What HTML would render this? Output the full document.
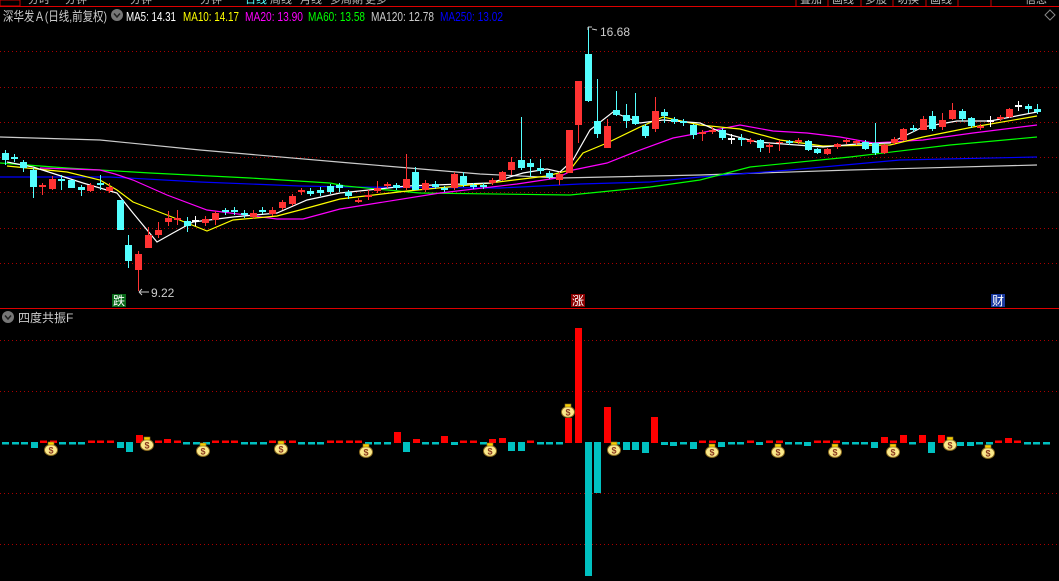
<!DOCTYPE html>
<html><head><meta charset="utf-8">
<style>
html,body{margin:0;padding:0;background:#000;width:1059px;height:581px;overflow:hidden;}
svg{display:block;}
text{font-family:"Liberation Sans","Noto Sans CJK SC",sans-serif;}
</style></head>
<body>
<svg id="s" width="1059" height="581" viewBox="0 0 1059 581" xmlns="http://www.w3.org/2000/svg">
<rect width="1059" height="581" fill="#000"/>
<g fill="#bbb" font-size="11">
<text x="28" y="3">分时</text><text x="65" y="3">分钟</text><text x="130" y="3">分钟</text><text x="200" y="3">分钟</text>
<text x="245" y="3" fill="#5ff">日线</text><text x="270" y="3">周线</text><text x="300" y="3">月线</text><text x="330" y="3">多周期</text><text x="365" y="3">更多</text>
<text x="800" y="3">叠加</text><text x="832" y="3">画线</text><text x="865" y="3">多股</text><text x="897" y="3">切换</text><text x="930" y="3">画线</text><text x="1025" y="3">信息</text>
</g>
<rect x="0" y="0" width="20" height="6" fill="#000" stroke="#c00"/>
<line x1="0" y1="6.5" x2="1059" y2="6.5" stroke="#d00" stroke-width="1"/>
<g stroke="#c00"><line x1="796" y1="0" x2="796" y2="6"/><line x1="828" y1="0" x2="828" y2="6"/><line x1="861" y1="0" x2="861" y2="6"/><line x1="893" y1="0" x2="893" y2="6"/><line x1="926" y1="0" x2="926" y2="6"/><line x1="958" y1="0" x2="958" y2="6"/><line x1="991" y1="0" x2="991" y2="6"/></g>
<text x="3" y="21" font-size="13" fill="#ccc" textLength="104" lengthAdjust="spacingAndGlyphs">深华发Ａ(日线,前复权)</text>
<circle cx="117" cy="15" r="6" fill="#777"/><path d="M114 13.5 L117 17 L120 13.5" stroke="#222" stroke-width="1.5" fill="none"/>
<g font-size="13">
<text x="126" y="21" fill="#fff" textLength="50" lengthAdjust="spacingAndGlyphs">MA5: 14.31</text>
<text x="183" y="21" fill="#ff0" textLength="56" lengthAdjust="spacingAndGlyphs">MA10: 14.17</text>
<text x="245" y="21" fill="#f0f" textLength="58" lengthAdjust="spacingAndGlyphs">MA20: 13.90</text>
<text x="308" y="21" fill="#0f0" textLength="57" lengthAdjust="spacingAndGlyphs">MA60: 13.58</text>
<text x="371" y="21" fill="#ccc" textLength="63" lengthAdjust="spacingAndGlyphs">MA120: 12.78</text>
<text x="440" y="21" fill="#00f" textLength="63" lengthAdjust="spacingAndGlyphs">MA250: 13.02</text>
</g>
<path d="M1050 10 L1055 15 L1050 20 L1045 15 Z" stroke="#888" fill="none"/>
<g id="grid" stroke="#a00" stroke-dasharray="1 3"></g>
<g id="ma" fill="none" stroke-width="1.2"></g>
<g id="cs"></g>
<path d="M588 27 L588 30 M588 27 L592 27 M592 29 L597 30" stroke="#ccc" fill="none"/>
<text x="600" y="36" font-size="12" fill="#ccc">16.68</text>
<path d="M139 292 L149 292 M139 292 L142 289 M139 292 L142 295" stroke="#ccc" fill="none"/>
<text x="151" y="297" font-size="12" fill="#ccc">9.22</text>
<rect x="112" y="294" width="14" height="13" fill="#0a6a1a"/><text x="113" y="305" font-size="12" fill="#fff">跌</text>
<rect x="571" y="294" width="14" height="13" fill="#8a0000"/><text x="572" y="305" font-size="12" fill="#fff">涨</text>
<rect x="991" y="294" width="14" height="13" fill="#1a3aa0"/><text x="992" y="305" font-size="12" fill="#fff">财</text>
<line x1="0" y1="308.5" x2="1059" y2="308.5" stroke="#d00"/>
<circle cx="8" cy="317" r="6" fill="#777"/><path d="M5 315.5 L8 319 L11 315.5" stroke="#222" stroke-width="1.5" fill="none"/>
<text x="18" y="322" font-size="12" fill="#ccc">四度共振F</text>
<g id="bars"></g>
<g id="bags"></g>
</svg>
<script>
var NS="http://www.w3.org/2000/svg";
function el(p,t,a){var e=document.createElementNS(NS,t);for(var k in a)e.setAttribute(k,a[k]);document.getElementById(p).appendChild(e);return e;}
[51,87,122,157,192,228,263,340,391,493,544].forEach(function(y){el("grid","line",{x1:0,y1:y+.5,x2:1059,y2:y+.5});});
var M={
"#ccc":[[0,137],[100,140],[200,150],[350,163],[480,174],[560,178],[700,175],[850,170],[1037,165]],
"#0000ff":[[0,177],[110,177],[200,182],[300,186],[350,187],[500,188],[580,184],[650,182],[700,177],[790,170],[900,160],[1037,157]],
"#00ff00":[[0,163],[67,168],[150,173],[250,178],[330,183],[345,186],[420,193],[570,195],[600,192],[650,187],[700,180],[750,167],[850,157],[950,145],[1037,137]],
"#ff00ff":[[40,168],[100,170],[115,174],[133,180],[167,195],[207,210],[277,219],[303,219],[340,209],[440,193],[517,184],[557,178],[573,170],[607,163],[640,150],[673,138],[700,133],[740,125],[773,131],[807,133],[840,137],[873,143],[923,140],[973,133],[1037,125]],
"#ffff00":[[7,166],[67,172],[100,180],[117,190],[133,202],[167,215],[207,231],[233,220],[277,216],[300,210],[340,199],[407,191],[490,183],[547,176],[570,170],[583,153],[607,143],[640,127],[663,117],[700,125],[740,129],[780,140],[823,146],[890,145],[923,137],[973,127],[1037,116]],
"#ffffff":[[7,162],[33,167],[83,183],[117,193],[133,213],[157,242],[173,233],[193,222],[233,217],[277,213],[307,200],[340,193],[407,186],[490,183],[523,173],[547,169],[560,172],[573,160],[590,130],[613,112],[640,123],[663,120],[700,123],[723,133],[757,142],[823,147],[857,144],[890,143],[923,127],[957,121],[990,121],[1037,112]]};
for(var c in M){el("ma","polyline",{points:M[c].map(function(p){return p.join(",")}).join(" "),stroke:c});}
var C=[[5,153,160,150,165,"c"],[14,157,159,154,162,"c"],[23,162,168,160,172,"c"],[33,170,187,168,198,"c"],[42,185,187,183,195,"r"],[52,179,189,176,190,"r"],[61,179,181,175,190,"c"],[71,180,188,180,188,"c"],[81,187,190,185,196,"c"],[90,185,191,183,192,"r"],[100,183,185,175,190,"c"],[109,187,191,183,193,"r"],[120,200,230,200,230,"c"],[128,245,261,235,268,"c"],[138,254,270,251,291,"r"],[148,235,248,227,248,"r"],[158,230,235,222,238,"r"],[168,218,222,211,226,"r"],[177,218,220,210,225,"r"],[187,221,226,217,232,"c"],[195,220,222,216,226,"w"],[205,219,223,216,226,"r"],[215,213,220,211,225,"r"],[225,210,212,208,215,"c"],[234,210,212,207,215,"c"],[244,213,215,210,218,"c"],[253,213,217,210,219,"r"],[262,210,212,207,214,"c"],[272,210,214,207,216,"r"],[282,202,208,200,210,"r"],[292,196,204,194,206,"r"],[301,190,192,188,195,"r"],[310,191,194,188,196,"c"],[320,190,193,187,196,"c"],[330,186,192,184,194,"c"],[339,185,188,183,192,"c"],[348,192,196,190,199,"c"],[358,200,202,198,203,"r"],[368,195,197,190,200,"r"],[377,188,191,181,193,"r"],[387,184,186,182,188,"r"],[396,185,188,183,190,"c"],[406,179,188,154,190,"r"],[415,172,190,167,190,"c"],[425,183,190,180,192,"r"],[435,184,187,181,189,"c"],[444,188,190,186,192,"c"],[454,174,188,172,190,"r"],[463,176,185,172,187,"c"],[473,185,187,183,189,"c"],[483,185,187,183,189,"c"],[492,180,183,178,185,"r"],[502,172,180,171,181,"r"],[511,162,170,157,175,"r"],[521,160,168,117,170,"c"],[530,163,167,159,177,"c"],[540,168,171,159,174,"c"],[549,173,177,171,179,"c"],[559,174,180,172,185,"r"],[569,130,173,130,173,"r"],[578,81,125,81,143,"r"],[588,54,101,27,102,"c"],[597,121,134,79,138,"c"],[607,126,148,119,148,"r"],[616,110,115,91,116,"c"],[626,115,121,104,128,"c"],[635,116,124,93,125,"c"],[645,126,136,124,138,"c"],[655,111,129,97,132,"r"],[664,112,116,109,123,"c"],[674,119,122,117,124,"c"],[683,121,123,119,126,"c"],[693,125,135,124,139,"c"],[702,132,134,130,141,"r"],[712,130,132,127,134,"r"],[722,130,138,128,140,"c"],[731,138,140,134,144,"w"],[741,138,140,134,146,"c"],[750,140,142,138,144,"r"],[760,140,148,139,152,"c"],[769,145,147,143,153,"r"],[779,142,143,140,151,"r"],[789,141,143,140,145,"c"],[798,140,142,138,144,"r"],[808,141,150,140,151,"c"],[817,149,153,148,154,"c"],[827,149,154,148,155,"r"],[837,144,147,143,149,"r"],[846,140,142,139,144,"r"],[856,141,143,140,145,"r"],[865,142,149,140,150,"c"],[875,143,153,123,155,"c"],[884,145,153,144,154,"r"],[894,139,143,137,145,"r"],[903,129,140,128,141,"r"],[913,128,130,125,132,"c"],[923,119,130,116,130,"r"],[932,116,129,111,131,"c"],[942,120,127,113,130,"r"],[952,110,119,103,120,"r"],[962,111,119,109,121,"c"],[971,118,126,117,128,"c"],[980,126,128,124,130,"r"],[990,120,122,116,127,"w"],[1000,117,119,115,121,"r"],[1009,109,117,108,118,"r"],[1018,105,107,101,111,"w"],[1028,106,109,104,113,"c"],[1037,109,112,104,114,"c"]];
var col={r:"#ff3333",c:"#54ffff",w:"#ffffff"};
C.forEach(function(d){var x=d[0],k=col[d[5]];el("cs","line",{x1:x+.5,y1:d[3],x2:x+.5,y2:d[4],stroke:k});el("cs","rect",{x:x-3,y:d[1],width:7,height:Math.max(1,d[2]-d[1]),fill:k});});
var big={};
[[33,-5],[117,-5],[126,-9],[136,7],[165,3],[400,10],[409,-9],[419,3],[448,6],[457,-2],[495,3],[504,4],[514,-8],[521,-8],[569,24],[578,114],[588,-133],[597,-50],[607,35],[626,-7],[635,-7],[645,-10],[655,25],[664,-2],[674,-3],[693,-6],[722,-4],[760,-2],[808,-3],[875,-5],[884,5],[903,7],[922,7],[932,-10],[942,7],[961,-3],[970,-3],[1009,4]].forEach(function(b){big[b[0]]=b[1];});
for(var x=5;x<1055;x+=9.55){var xi=Math.round(x),v=null;for(var k in big){if(Math.abs(k-xi)<=4){v=big[k];}}
 if(v===null){v=(Math.floor(xi/30)%2?1:-1)*1.5;}
 var kc=v>0?"#ff0000":"#00c0c0";
 if(v>0)el("bars","rect",{x:xi-3,y:442-v,width:7,height:v+1,fill:kc});else el("bars","rect",{x:xi-3,y:442,width:7,height:-v+1,fill:kc});}
[[51,448],[147,443],[203,449],[281,447],[366,450],[490,449],[568,410],[614,448],[712,450],[778,450],[835,450],[893,450],[950,443],[988,451]].forEach(function(b){
 var x=b[0],y=b[1];
 el("bags","ellipse",{cx:x,cy:y+2,rx:6.5,ry:5.5,fill:"#fbe98a",stroke:"#8a6a20","stroke-width":1});
 el("bags","rect",{x:x-3,y:y-6,width:6,height:3,fill:"#f5d000",stroke:"#8a6a20","stroke-width":.6});
 var t=el("bags","text",{x:x,y:y+5.5,"font-size":"9","font-weight":"bold",fill:"#8a3a20","text-anchor":"middle"});t.textContent="$";
});
</script>
</body></html>
